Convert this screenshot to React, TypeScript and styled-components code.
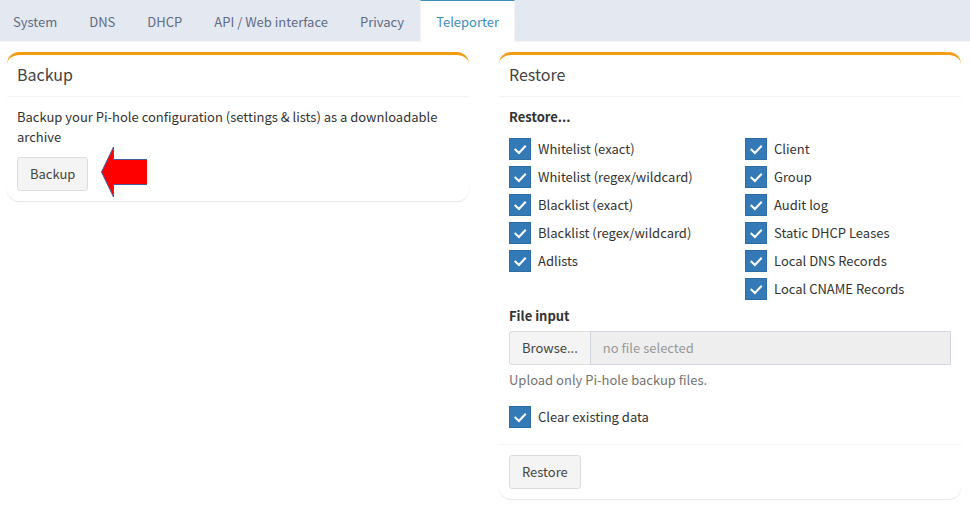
import React, { useState } from "react";
import styled, { createGlobalStyle } from "styled-components";

const GlobalStyle = createGlobalStyle`
  *, *::before, *::after { box-sizing: border-box; }
  body {
    margin: 0;
    background: #fff;
    color: #333;
    font-family: "Source Sans Pro", "Noto Sans CJK JP", "Noto Sans", sans-serif;
    font-size: 13px;
    line-height: 20px;
  }
  button, input { font: inherit; }
`;

const TabBar = styled.nav`
  display: flex;
  height: 42px;
  padding-left: 12px;
  background: #e4e8f0;
  border-bottom: 1px solid #f4f4f4;
`;

const Tab = styled.a<{ $active?: boolean }>`
  height: 42px;
  padding: ${(p) => (p.$active ? "11px 15px 10px" : "12px 15px 10px")};
  border: solid ${(p) => (p.$active ? "#f4f4f4" : "transparent")};
  border-width: 0 1px;
  border-top: ${(p) => (p.$active ? "1px solid #3c8dbc" : "0")};
  background: ${(p) => (p.$active ? "#fff" : "transparent")};
  color: ${(p) => (p.$active ? "#3c8dbc" : "#606c84")};
  text-decoration: none;
  white-space: nowrap;

  &:first-child { padding-left: 0; }
`;

const Content = styled.main`
  display: grid;
  grid-template-columns: 1fr 1fr;
  align-items: start;
  gap: 30px;
  padding: 10px 9px 16px 7px;
`;

const Card = styled.section`
  border-top: 3px solid #f39c12;
  border-radius: 12px;
  box-shadow: 0 1px 1px rgba(0, 0, 0, 0.1);
`;

const CardHeader = styled.header`
  padding: 9px 10px 12px;
  border-bottom: 1px solid #f4f4f4;
`;

const CardTitle = styled.h3`
  margin: 0;
  font-size: 16px;
  font-weight: 400;
  line-height: 20px;
  color: #444;
`;

const CardBody = styled.div`
  padding: 10px;
`;

const CardFooter = styled.footer`
  padding: 10px;
  border-top: 1px solid #f4f4f4;
`;

const Paragraph = styled.p`
  margin: 0 0 10px;
`;

const Button = styled.button`
  height: 34px;
  padding: 0 12px;
  border: 1px solid #ddd;
  border-radius: 3px;
  background: #f4f4f4;
  color: #444;
  cursor: pointer;
`;

const ActionRow = styled.div`
  position: relative;
  display: flex;
`;

const Pointer = styled.svg`
  position: absolute;
  left: 83px;
  top: -12px;
`;

const Heading = styled.div`
  font-weight: 700;
`;

const Options = styled.div`
  display: grid;
  grid-template-columns: 1fr 1fr;
  gap: 30px;
  margin: 11px 0 6px;
`;

const OptionColumn = styled.div`
  display: flex;
  flex-direction: column;
  gap: 6px;
`;

const CheckLabel = styled.label`
  display: flex;
  align-items: center;
  gap: 7px;
  height: 22px;
  cursor: pointer;
`;

const CheckBox = styled.span`
  display: grid;
  flex: none;
  width: 22px;
  height: 22px;

  > * { grid-area: 1 / 1; }
`;

const CheckInput = styled.input`
  appearance: none;
  width: 22px;
  height: 22px;
  margin: 0;
  border: 1px solid #2e6da4;
  background: #fff;
  cursor: pointer;

  &:checked { background: #337ab7; }
`;

const CheckMark = styled.svg`
  pointer-events: none;
`;

const FieldLabel = styled.label`
  display: block;
  margin-bottom: 5px;
  font-weight: 700;
`;

const FileGroup = styled.div`
  display: flex;
`;

const BrowseButton = styled(Button)`
  border-right: 0;
  border-radius: 3px 0 0 3px;
`;

const FileName = styled.input`
  flex: 1;
  min-width: 0;
  height: 34px;
  padding: 5px 12px 7px;
  border: 1px solid #d2d6de;
  border-radius: 0;
  background: #eee;
  color: #555;

  &::placeholder { color: #999; opacity: 1; }
`;

const Help = styled.p`
  margin: 5px 0 16px;
  color: #737373;
`;

const ClearRow = styled.div`
  margin-bottom: 6px;
`;

const tabs = ["System", "DNS", "DHCP", "API / Web interface", "Privacy", "Teleporter"];

const optionColumns = [
  [
    "Whitelist (exact)",
    "Whitelist (regex/wildcard)",
    "Blacklist (exact)",
    "Blacklist (regex/wildcard)",
    "Adlists",
  ],
  [
    "Client",
    "Group",
    "Audit log",
    "Static DHCP Leases",
    "Local DNS Records",
    "Local CNAME Records",
  ],
];

function Check({ label }: { label: string }) {
  const [checked, setChecked] = useState(true);
  return (
    <CheckLabel>
      <CheckBox>
        <CheckInput
          type="checkbox"
          checked={checked}
          onChange={(e) => setChecked(e.target.checked)}
        />
        {checked && (
          <CheckMark width="22" height="22" viewBox="0 0 22 22" aria-hidden="true">
            <path d="M5.7 11 L9.9 15 L16.7 7.8" fill="none" stroke="#fff" strokeWidth="2" />
          </CheckMark>
        )}
      </CheckBox>
      {label}
    </CheckLabel>
  );
}

export default function App() {
  return (
    <>
      <GlobalStyle />
      <TabBar>
        {tabs.map((tab) => (
          <Tab key={tab} href="#" $active={tab === "Teleporter"}>
            {tab}
          </Tab>
        ))}
      </TabBar>
      <Content>
        <Card>
          <CardHeader>
            <CardTitle>Backup</CardTitle>
          </CardHeader>
          <CardBody>
            <Paragraph>
              Backup your Pi-hole configuration (settings &amp; lists) as a downloadable archive
            </Paragraph>
            <ActionRow>
              <Button type="button">Backup</Button>
              <Pointer width="47" height="53" viewBox="0 0 47 53" aria-hidden="true">
                <path
                  d="M47 14.5 H13.5 V2 L1.5 27 L13.5 52 V39.5 H47"
                  fill="#f00"
                  stroke="#3f5f9f"
                  strokeWidth="1"
                />
              </Pointer>
            </ActionRow>
          </CardBody>
        </Card>
        <Card>
          <CardHeader>
            <CardTitle>Restore</CardTitle>
          </CardHeader>
          <CardBody>
            <Heading>Restore...</Heading>
            <Options>
              {optionColumns.map((column) => (
                <OptionColumn key={column[0]}>
                  {column.map((label) => (
                    <Check key={label} label={label} />
                  ))}
                </OptionColumn>
              ))}
            </Options>
            <FieldLabel htmlFor="backup-file">File input</FieldLabel>
            <FileGroup>
              <BrowseButton type="button">Browse...</BrowseButton>
              <FileName id="backup-file" type="text" placeholder="no file selected" readOnly />
            </FileGroup>
            <Help>Upload only Pi-hole backup files.</Help>
            <ClearRow>
              <Check label="Clear existing data" />
            </ClearRow>
          </CardBody>
          <CardFooter>
            <Button type="button">Restore</Button>
          </CardFooter>
        </Card>
      </Content>
    </>
  );
}
